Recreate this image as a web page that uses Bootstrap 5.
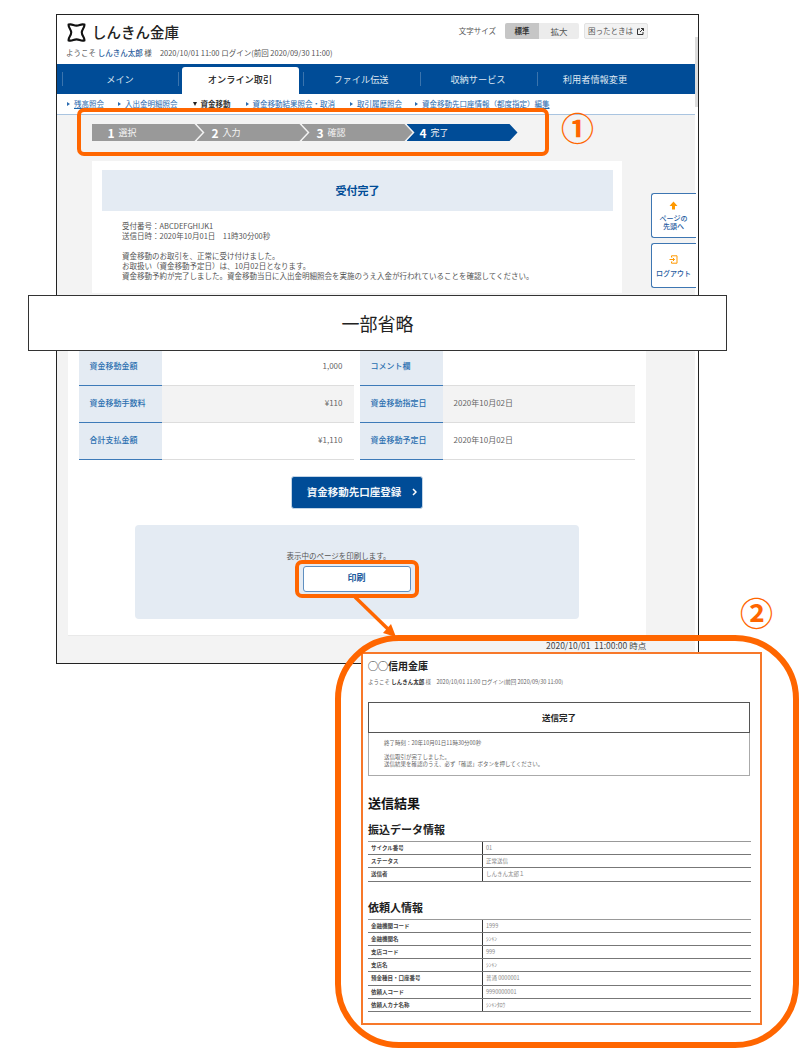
<!doctype html>
<html lang="ja"><head><meta charset="utf-8">
<link rel="stylesheet" href="https://cdn.jsdelivr.net/npm/bootstrap@5.3.0/dist/css/bootstrap.min.css">
<style>
html,body{background:#fff;margin:0}
body{font-family:"Noto Sans CJK JP","Liberation Sans",sans-serif;color:#444;font-size:8px;line-height:10px}
.canvas{position:relative;width:800px;height:1060px;overflow:hidden}
.frame{position:absolute;left:56px;top:14px;width:643px;height:650px;border:1.5px solid #222;background:#f3f3f3;overflow:hidden}
.bar-scroll{position:absolute;right:0;top:0;bottom:0;width:3px;background:#fff}
.bar-scroll::before{content:"";position:absolute;left:0;right:0;top:22px;height:70px;background:#dcdcdc}
.inner{width:638px}
.head{height:49px;background:#fff;position:relative;padding:7px 9px 0}
.brand{font-size:14.5px;line-height:20px;color:#222;font-weight:500;gap:6px;margin-left:1px}
.welcome{font-size:7.5px;line-height:10px;margin-top:6px;color:#555;gap:8px}
.welcome b{color:#2e5f9e;font-weight:500}
.tools{position:absolute;right:47px;top:8px;gap:5px;font-size:7.5px;color:#555}
.sizes{border-radius:2px;overflow:hidden}
.sizes span{width:40px;height:16px;background:#ececec;font-size:8.5px}
.sizes .on{width:34px;background:#c6c6c6;color:#333;font-weight:700;font-size:7.5px}
.help{width:64px;height:16px;background:#f2f2f2;border:1px solid #e2e2e2;border-radius:2px}
.mainnav{height:29.5px;background:#004c97;padding-left:4.5px}
.mainnav a{width:117px;margin-top:3px;height:26.5px;color:#dfe8f2;font-size:9.2px;text-decoration:none;position:relative;padding-bottom:3px}
.mainnav a::before{content:"";position:absolute;left:0;top:5px;height:14px;border-left:1px solid #3b74ad}
.mainnav a.pre::after{content:"";position:absolute;right:0;top:5px;height:14px;border-right:1px solid #3b74ad}
.mainnav a.on{background:#fff;color:#222;font-weight:500;border-radius:3px 3px 0 0;margin-left:3px;margin-right:4px}
.mainnav a.on::before{display:none}
.subnav{height:21px;background:#fff;border-bottom:1px solid #a9c4e0;padding-left:10px;font-size:7.5px;line-height:20px}
.subnav a{color:#1e67ad;text-decoration:underline;white-space:nowrap}
.it{display:inline-flex;align-items:center;gap:4px;white-space:nowrap;margin-right:15px}
.it.first{margin-right:14px}
.it.fifth{margin-right:13px}
.subnav i{display:inline-block;border-left:3px solid #2b6bb0;border-top:2px solid transparent;border-bottom:2px solid transparent}
.subnav i.dn{border-left:2.5px solid transparent;border-right:2.5px solid transparent;border-top:4px solid #222;border-bottom:0}
.subnav b{color:#333;font-weight:700}
.steps{margin:9.5px 0 0 34.5px;height:17px;width:427px}
.stp{flex:0 0 111px;height:17px;background:#999;color:#f4f4f4;font-size:9px;padding-left:15px;gap:4px;margin-left:-6px;clip-path:polygon(0 0,103px 0,100% 50%,103px 100%,0 100%,8px 50%)}
.stp:first-child{margin-left:0;padding-left:16px;clip-path:polygon(0 0,103px 0,100% 50%,103px 100%,0 100%)}
.stp b{font-size:12px;font-weight:700;line-height:17px;color:#fff}
.stp.cur{background:#004c97;padding-left:13px}
.notice{margin:20px 0 0 35px;width:530px;height:132px;background:#fff;padding:9px 9px 0 10px}
.band{height:41px;background:#e4ebf3;color:#004c97;font-size:11px;font-weight:700;padding-bottom:2px}
.notice p{margin:10px 0 0 20px;font-size:7.5px;line-height:10px;color:#555}
.side{position:absolute;left:593.5px;width:45px;height:45px;background:#fff;border:1.5px solid #3d76b2;border-right:0;border-radius:3px 0 0 3px;color:#1e5a9e;font-size:7px;line-height:8px;font-weight:500;text-align:center}
.side svg{display:block}
.side.up{top:178px;padding-top:7px}
.side.out{top:228px;padding-top:11px}
.side.out span{margin-top:5px}
.sheet{position:absolute;left:10.5px;top:334px;width:578px;height:287px;background:#fff;border-bottom:1px solid #e9e9e9}
.grid-t{margin:0 0 0 11px;width:556px;display:grid;grid-template-columns:83px 192px 6px 83px 192px;grid-auto-rows:37px;font-size:8px;line-height:9px}
.kh{background:#e4ebf3;color:#2a6fb0;border-bottom:1.5px solid #3d7ab8;padding:0 0 3px 11px;font-weight:500}
.kv{border-bottom:1px solid #ddd;color:#666;padding:0 11px 3px}
.kv.alt{background:#f3f3f3}
.cta{width:132px;height:33px;margin:16px 0 0 223px;background:#004c97;border:1px solid #c2d4e6;border-radius:3px;color:#f2f6fa;font-size:10.5px;font-weight:700;gap:11px;padding:0 0 2px 11px}
.printbox{margin:16px 0 0 67px;width:444px;height:94px;background:#e4ebf3;border-radius:4px;padding-top:26px;text-align:center;color:#555;font-size:7.5px}
.printnote{display:block;margin-right:36px}
.printbtn{width:108px;height:26px;margin:5px auto 0;background:#fff;border:1px solid #5f8fc0;border-radius:3px;color:#1e5a9e;font-weight:700;font-size:9px;padding:0 0 2px}
.stamp{position:absolute;left:546px;top:640px;font-size:8.5px;line-height:11px;color:#444;white-space:nowrap}
.hl{position:absolute;border:4.5px solid #f60;border-radius:7px;pointer-events:none}
.hl.a{left:77px;top:108px;width:472px;height:48px}
.hl.b{left:295px;top:560px;width:124px;height:38px}
.skip{position:absolute;left:28px;top:295px;width:699px;height:55.5px;background:#fff;border:1.5px solid #333;color:#222;font-size:18px}
.num{position:absolute;color:#f60;font-family:"Noto Sans CJK JP",sans-serif;font-size:33px;line-height:36px;font-weight:700}
.num.a{left:561px;top:109px}
.num.b{left:740px;top:594px}
.big{position:absolute;left:335px;top:635px;width:464px;height:413px;border:6px solid #f60;border-radius:64px}
.arrow{position:absolute;left:350px;top:595px;width:50px;height:44px}
.printed{position:absolute;left:361px;top:652px;width:401px;height:373px;background:#fff;border:2px solid #f7782a;padding:0 10px 0 5px;color:#222}
.ph1{font-size:10px;line-height:14px;font-weight:700;margin-top:5px;color:#222}
.pw{font-size:5.5px;line-height:7px;margin-top:6px;color:#666}
.pw b{color:#333}
.pbox{border:1px solid #aaa;margin-top:16px;height:74px;width:382px}
.pbox div.t{height:31px;border:1px solid #555;margin:-1px;font-size:8.5px;font-weight:700;color:#222;padding-bottom:2px}
.pbox p{font-size:5.5px;line-height:7.2px;margin:7.5px 0 0 15px;color:#666}
.ph2{font-size:13px;line-height:16px;font-weight:700;margin:19px 0 0;color:#111}
.ph3{font-size:11px;line-height:14px;font-weight:700;margin:11px 0 5px;color:#222}
.ph3.nx{margin-top:18px}
.ptab{width:383px;border-top:1.5px solid #999;font-size:5.5px}
.prow{display:flex;height:13.2px;border-bottom:1.2px solid #777;align-items:center}
.prow span:first-child{width:115px;padding-left:3px;border-right:1px solid #333;height:100%;display:flex;align-items:center;font-weight:700;color:#444}
.prow span:last-child{padding-left:3px;color:#888}
</style></head><body>
<div class="canvas">
<div class="frame">
 <div class="inner">
  <div class="head">
   <div class="brand d-flex align-items-center">
    <svg width="19" height="19" viewBox="0 0 18 18" fill="none" stroke="#111" stroke-width="2"><path d="M1.500 1.500C5 .5 6 2.500 9 2.500S13 .5 16.500 1.500C17 4 14 6 14 9S17 14 16.500 16.500C13 17.500 12 15.500 9 15.500S5 17.500 1.500 16.500C1 14 4 12 4 9S1 4 1.500 1.500Z"/></svg>
    <span>しんきん金庫</span></div>
   <div class="welcome d-flex"><span>ようこそ <b>しんきん太郎</b> 様</span><span>2020/10/01 11:00 ログイン(前回 2020/09/30 11:00)</span></div>
   <div class="tools d-flex align-items-center"><span class="me-1">文字サイズ</span>
    <div class="sizes d-flex"><span class="on d-flex align-items-center justify-content-center">標準</span><span class="d-flex align-items-center justify-content-center">拡大</span></div>
    <div class="help d-flex align-items-center justify-content-center gap-1">困ったときは<svg width="7" height="7" viewBox="0 0 7 7" fill="none" stroke="#333" stroke-width="1"><path d="M3 1H.5V6.500H6V4"/><path d="M3 4 6.500.5M4 .5H6.500V3"/></svg></div>
   </div>
  </div>
  <div class="mainnav d-flex">
   <a class="d-flex align-items-center justify-content-center pre" href="#">メイン</a>
   <a class="d-flex align-items-center justify-content-center on" href="#">オンライン取引</a>
   <a class="d-flex align-items-center justify-content-center" href="#">ファイル伝送</a>
   <a class="d-flex align-items-center justify-content-center" href="#">収納サービス</a>
   <a class="d-flex align-items-center justify-content-center" href="#">利用者情報変更</a>
  </div>
  <div class="subnav d-flex">
   <span class="it first"><i></i><a href="#">残高照会</a></span>
   <span class="it"><i></i><a href="#">入出金明細照会</a></span>
   <span class="it"><i class="dn"></i><b>資金移動</b></span>
   <span class="it"><i></i><a href="#">資金移動結果照会・取消</a></span>
   <span class="it fifth"><i></i><a href="#">取引履歴照会</a></span>
   <span class="it"><i></i><a href="#">資金移動先口座情報（都度指定）編集</a></span>
  </div>
  <div class="steps d-flex">
   <div class="stp d-flex align-items-center"><b>1</b>選択</div>
   <div class="stp d-flex align-items-center"><b>2</b>入力</div>
   <div class="stp d-flex align-items-center"><b>3</b>確認</div>
   <div class="stp cur d-flex align-items-center"><b>4</b>完了</div>
  </div>
  <div class="notice">
   <div class="band d-flex align-items-center justify-content-center">受付完了</div>
   <p>受付番号：ABCDEFGHIJK1<br>送信日時：2020年10月01日　11時30分00秒<br><br>資金移動のお取引を、正常に受け付けました。<br>お取扱い（資金移動予定日）は、10月02日となります。<br>資金移動予約が完了しました。資金移動当日に入出金明細照会を実施のうえ入金が行われていることを確認してください。</p>
  </div>
 </div>
 <div class="bar-scroll"></div>
 <div class="side up d-flex flex-column align-items-center"><svg width="9" height="9" viewBox="0 0 9 9"><path fill="#f90" d="M4.500.5 8.500 5H6V8.500H3V5H.5Z"/></svg><span class="mt-1">ページの<br>先頭へ</span></div>
 <div class="side out d-flex flex-column align-items-center"><svg width="9" height="9" viewBox="0 0 9 9" fill="none" stroke="#f90" stroke-width="1"><path d="M2.500 2.500V.8H8V8.200H2.500V6.500"/><path d="M.5 4.500H5.500M3.800 2.800 5.500 4.500 3.800 6.200"/></svg><span>ログアウト</span></div>
 <div class="sheet">
  <div class="grid-t">
   <div class="kh d-flex align-items-center">資金移動金額</div><div class="kv d-flex align-items-center justify-content-end">1,000</div><div></div><div class="kh d-flex align-items-center">コメント欄</div><div class="kv"></div>
   <div class="kh d-flex align-items-center">資金移動手数料</div><div class="kv alt d-flex align-items-center justify-content-end">¥110</div><div></div><div class="kh d-flex align-items-center">資金移動指定日</div><div class="kv alt d-flex align-items-center">2020年10月02日</div>
   <div class="kh d-flex align-items-center">合計支払金額</div><div class="kv d-flex align-items-center justify-content-end">¥1,110</div><div></div><div class="kh d-flex align-items-center">資金移動予定日</div><div class="kv d-flex align-items-center">2020年10月02日</div>
  </div>
  <button class="btn cta d-flex align-items-center justify-content-center">資金移動先口座登録<svg width="5" height="8" viewBox="0 0 5 8" fill="none" stroke="#fff" stroke-width="1.500"><path d="M1 1 4 4 1 7"/></svg></button>
  <div class="printbox"><span class="printnote">表示中のページを印刷します。</span><button class="btn printbtn d-flex align-items-center justify-content-center">印刷</button></div>
 </div>
</div>
<div class="stamp">2020/10/01&nbsp;&nbsp;11:00:00 時点</div>
<div class="hl a"></div>
<div class="num a">①</div>
<div class="skip d-flex align-items-center justify-content-center">一部省略</div>
<div class="hl b"></div>
<svg class="arrow" viewBox="0 0 50 44" fill="none"><path d="M5 2 40 36" stroke="#f60" stroke-width="3.500"/><path d="M46 42 33 38 41 29Z" fill="#f60"/></svg>
<div class="printed">
 <div class="ph1">◯◯信用金庫</div>
 <div class="pw">ようこそ <b>しんきん太郎</b> 様　2020/10/01 11:00 ログイン(前回 2020/09/30 11:00)</div>
 <div class="pbox"><div class="t d-flex align-items-center justify-content-center">送信完了</div>
  <p>終了時刻：20年10月01日11時30分00秒<br><br>送信取引が完了しました。<br>送信結果を確認のうえ、必ず「確認」ボタンを押してください。</p></div>
 <div class="ph2">送信結果</div>
 <div class="ph3">振込データ情報</div>
 <div class="ptab">
  <div class="prow"><span>サイクル番号</span><span>01</span></div>
  <div class="prow"><span>ステータス</span><span>正常送信</span></div>
  <div class="prow"><span>送信者</span><span>しんきん太郎１</span></div>
 </div>
 <div class="ph3 nx">依頼人情報</div>
 <div class="ptab">
  <div class="prow"><span>金融機関コード</span><span>1999</span></div>
  <div class="prow"><span>金融機関名</span><span>ｼﾝｷﾝ</span></div>
  <div class="prow"><span>支店コード</span><span>999</span></div>
  <div class="prow"><span>支店名</span><span>ｼﾝｷﾝ</span></div>
  <div class="prow"><span>預金種目・口座番号</span><span>普通 0000001</span></div>
  <div class="prow"><span>依頼人コード</span><span>9990000001</span></div>
  <div class="prow"><span>依頼人カナ名称</span><span>ｼﾝｷﾝﾀﾛｳ</span></div>
 </div>
</div>
<div class="big"></div>
<div class="num b">②</div>
</div>
<script src="https://cdn.jsdelivr.net/npm/bootstrap@5.3.0/dist/js/bootstrap.bundle.min.js"></script>
</body></html>
